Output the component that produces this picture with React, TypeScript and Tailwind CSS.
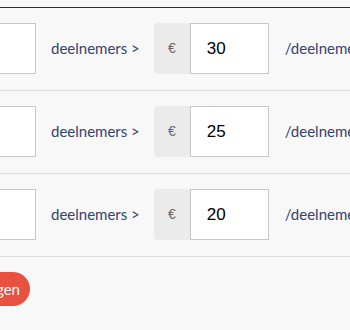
import type { JSX } from 'react';

const tiers = [30, 25, 20];

const Row = ({ price }: { price: number }): JSX.Element => (
  <div className="flex items-start pt-[15px] h-[83px] border-b border-[#dcdcdc] -ml-[44px]">
    <input
      type="text"
      className="w-[80px] h-[51px] bg-white border border-[#c8c8c8] shrink-0 outline-none"
      defaultValue=""
    />
    <span className="ml-[15px] h-[51px] flex items-center text-[15px] text-[#34426f] whitespace-nowrap shrink-0 font-['Lato',sans-serif]">
      deelnemers &gt;
    </span>
    <div className="flex ml-[14px] shrink-0">
      <div className="w-[36px] h-[51px] bg-[#ebebeb] rounded-l-[4px] flex items-center justify-center text-[14px] text-[#666] font-['Liberation_Sans',sans-serif]">
        €
      </div>
      <input
        type="text"
        className="w-[79px] h-[51px] bg-white border border-[#c8c8c8] px-[16px] text-[17px] text-black outline-none font-['Liberation_Sans',sans-serif]"
        defaultValue={String(price)}
      />
    </div>
    <span className="ml-[16px] h-[51px] flex items-center text-[15px] text-[#34426f] whitespace-nowrap font-['Lato',sans-serif]">
      /deelnemer
    </span>
  </div>
);

export default function App(): JSX.Element {
  return (
    <div className="w-[350px] h-[330px] overflow-hidden bg-[#f8f8f8]">
      <div className="pt-[7px]">
        <div className="border-t border-[#272a5c]">
          {tiers.map((p) => (
            <Row key={p} price={p} />
          ))}
        </div>
        <div className="pt-[15px] -ml-[60px]">
          <button className="h-[34px] w-[90px] rounded-full bg-[#e8513f] text-white text-[15px] text-right pr-[10px] whitespace-nowrap font-['Lato',sans-serif]">
            Toevoegen
          </button>
        </div>
      </div>
    </div>
  );
}
